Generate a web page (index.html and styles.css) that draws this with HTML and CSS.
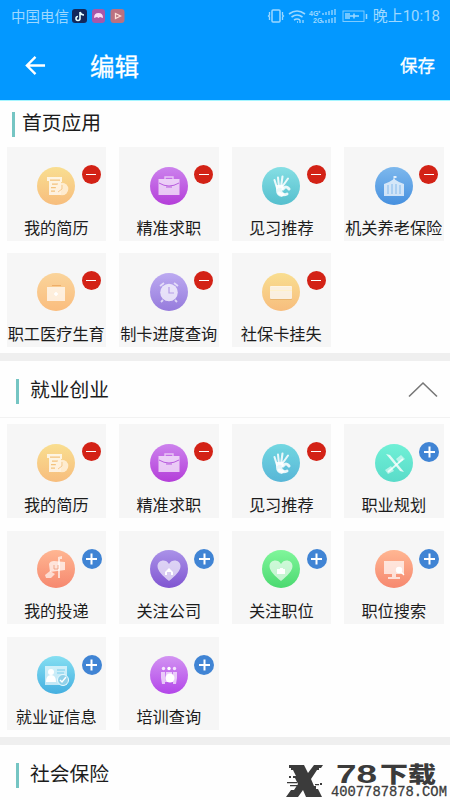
FILE: index.html
```
<!DOCTYPE html>
<html lang="zh-CN">
<head>
<meta charset="utf-8">
<meta name="viewport" content="width=device-width">
<title>编辑</title>
<link rel="stylesheet" href="styles.css">
</head>
<body>
<svg class="defs" aria-hidden="true">
  <symbol id="resume" viewBox="0 0 38 38"><path d="M10 10h15v5h-1v13H12V14h-2z" opacity=".75"/><path d="M13 12.500h10v1.200H13zM15 16.500h6v1.200h-6zM14 20h5v1.200h-5zM14 23.500h4v1.200h-4z" fill="#f4c27c"/><circle cx="25" cy="22" r="6.300" fill="#fff1dc" opacity=".85"/><path d="M25 18v4l-4 3" fill="none" stroke="#f6c98f"/></symbol>
  <symbol id="briefcase" viewBox="0 0 38 38"><path d="M15 12v-2h8v2" fill="none" stroke="#fff" stroke-width="1.400" opacity=".6"/><path d="M8.500 12h21v16h-21z" opacity=".68"/><path d="M9 16q10 6 20 0M16 20h6" fill="none" stroke="#b85dde" stroke-width="1"/></symbol>
  <symbol id="hand" viewBox="0 0 38 38"><g fill="none" stroke="#fff" stroke-linecap="round" opacity=".85"><path d="M15 21L12.500 13M17 20L16 10.500M19 20L20.500 9.500M20 20L26 11.500" stroke-width="2.100"/><path d="M17 26q4 3 8 1M21 22q3-4 6 0" stroke-width="3"/></g><path d="M14 18h7l1 3-2 3 3 3-3 3q-6-1-6-7z" opacity=".85"/></symbol>
  <symbol id="building" viewBox="0 0 38 38"><path d="M9 17l5-2 5-3 5 3 5 2v12H9z" opacity=".72"/><path d="M18.500 13V9h3v2h-2v2" opacity=".8"/><path d="M13 18v9M17 17v10M21 17v10M25 18v9" stroke="#71afe9" stroke-width=".8"/></symbol>
  <symbol id="medical" viewBox="0 0 38 38"><path d="M15 12.500h9" fill="none" stroke="#eeae69"/><path d="M10 14h18v14H10z" opacity=".7"/><path d="M19 19v4M17 21h4" stroke="#fff" stroke-width="1.500"/></symbol>
  <symbol id="clock" viewBox="0 0 38 38"><circle cx="19" cy="19.500" r="8.800" opacity=".72"/><path d="M10 13l4-3M28 13l-4-3M13 27l-2 2M25 27l2 2" stroke="#fff" stroke-width="1.800" opacity=".65"/><path d="M19 14v6h5" fill="none" stroke="#b59be8" stroke-width="1.200"/></symbol>
  <symbol id="card" viewBox="0 0 38 38"><rect x="8" y="14" width="22" height="13" rx="1" fill="#c88b43" opacity=".3"/><rect x="8" y="13" width="22" height="13" rx="1" opacity=".78"/><path d="M8 17.500h22" stroke="#fff0c9"/></symbol>
  <symbol id="plan" viewBox="0 0 38 38"><path d="M11 10l4 1 14 17-4-1z" opacity=".8"/><path d="M21 15l5-4 4 4-6 4zM10 26l6-4 3 5-6 3z" opacity=".55"/><path d="M28 15L13 28" stroke="#fff" stroke-width="1.700" opacity=".8"/></symbol>
  <symbol id="mailbox" viewBox="0 0 38 38"><path d="M12 14q1-3 5-3l11 1v8l-15 2z" opacity=".7"/><path d="M21 11V7l4-1v3h-2v19h-2v-7" opacity=".65"/><path d="M8 25l5-4 5 3-4 4H9z" opacity=".65"/><path d="M17 15v4h4v-4" fill="none" stroke="#ed9c7c" stroke-width=".8"/></symbol>
  <symbol id="heart-home" viewBox="0 0 38 38"><path d="M19 31C13 26 7.500 21 7.500 16c0-6 8.500-8 11.500-2 3-6 11.500-4 11.500 2 0 5-5.500 10-11.500 15z" opacity=".65"/><path d="M15 22l4-4 4 4v3h-2v-3h-4v3h-2z"/></symbol>
  <symbol id="heart-work" viewBox="0 0 38 38"><path d="M19 31C13 26 7.500 21 7.500 16c0-6 8.500-8 11.500-2 3-6 11.500-4 11.500 2 0 5-5.500 10-11.500 15z" opacity=".65"/><path d="M15 19h3v-1h3v1h2v5h-8z"/></symbol>
  <symbol id="monitor" viewBox="0 0 38 38"><path d="M9 11h20v13h-8v3h4v2H13v-2h4v-3H9z" opacity=".7"/><circle cx="24" cy="20" r="3.200"/><path d="M26 22l3 3" stroke="#fff" stroke-width="1.300"/></symbol>
  <symbol id="id-card" viewBox="0 0 38 38"><path d="M8 10h22v19H8z" opacity=".65"/><circle cx="14" cy="16" r="3"/><path d="M9 26q0-7 5-7t5 7z"/><path d="M20 14h8M20 17h7" stroke="#79cdec"/><circle cx="26" cy="24" r="5.500" fill="#91d1e9" stroke="#e9faff"/><path d="M23 24l2 2 4-5" fill="none" stroke="#fff" stroke-width="1.400"/></symbol>
  <symbol id="people" viewBox="0 0 38 38"><circle cx="13.500" cy="12.500" r="1.700" opacity=".8"/><circle cx="19" cy="12.500" r="1.700"/><circle cx="24.500" cy="12.500" r="1.700" opacity=".8"/><path d="M11 16h4v12h-3l-1-6zM23 16h4v6l-1 6h-3z" opacity=".65"/><path d="M16 16h6l1 10h-8z" opacity=".65"/><circle cx="20" cy="22" r="4.500"/></symbol>
</svg>

<header class="header">
  <div class="status">
    <span class="carrier">中国电信</span>
    <svg class="apps" viewBox="0 0 54 16"><rect x="0" y="1" width="15" height="14" rx="3" fill="#13285b"/><path d="M8 4v6.500a2 2 0 1 1-2-2M8 4q1 3 4 3" fill="none" stroke="#e4ffff" stroke-width="1.600"/><rect x="20" y="1" width="13" height="14" rx="3" fill="#a858a8"/><path d="M22 10q0-5 4.500-5t4.500 5l-3-1-1.500 1-1.500-1z" fill="#fbdcf5"/><rect x="38.500" y="1" width="14" height="14" rx="3" fill="#bb7180"/><path d="M43.500 5.500l5 2.500-5 2.500z" fill="none" stroke="#ffe1d8" stroke-width="1.300"/></svg>
    <svg class="signals" viewBox="0 0 102 16" fill="none" stroke="#9ed8ff"><rect x="5" y="2" width="8" height="12" rx="1" stroke-width="1.500"/><path d="M2.500 4v3l-1 1 1 1v3M15.500 4v3l1 1-1 1v3" stroke-width="1.300"/><path d="M22 6q8-6 16 0M24.500 9q5.500-4 11 0M27 12q3-2 6 0" stroke-width="1.600"/><path d="M30 14h1M33 12v3M36 12v3" stroke-width="1.300"/><text x="42" y="7.500" class="network">4G⁺</text><text x="46" y="15" class="network">2G</text><path d="M56 7V5M59 7V4M62 7V3M65 7V2M68 7V1M56 15v-2M59 15v-3M62 15v-4M65 15v-5M68 15v-6" stroke-width="1.300"/><rect x="76" y="3" width="21" height="10.500" opacity=".8"/><path d="M99.500 6v5" stroke-width="1.500"/><path d="M78 5h5v6h-5z" fill="#72c6ff" stroke="none"/><path d="M83 8h9M87 5.500v5" stroke-width="1.500"/></svg>
    <span class="time">晚上10:18</span>
  </div>
  <div class="toolbar">
    <svg class="back" viewBox="0 0 22 22"><path d="M11 2L2 11l9 9M2.500 11H21" fill="none" stroke="#fff" stroke-width="2.500"/></svg>
    <h1 class="title">编辑</h1>
    <span class="save">保存</span>
  </div>
</header>

<main>
  <section class="home">
    <h2 class="heading home-heading">首页应用</h2>
    <div class="grid">
      <div class="tile"><svg class="icon yellow"><use href="#resume"/></svg><i class="badge minus"></i><span class="label">我的简历</span></div>
      <div class="tile"><svg class="icon purple"><use href="#briefcase"/></svg><i class="badge minus"></i><span class="label">精准求职</span></div>
      <div class="tile"><svg class="icon cyan"><use href="#hand"/></svg><i class="badge minus"></i><span class="label">见习推荐</span></div>
      <div class="tile"><svg class="icon blue"><use href="#building"/></svg><i class="badge minus"></i><span class="label">机关养老保险</span></div>
      <div class="tile"><svg class="icon orange"><use href="#medical"/></svg><i class="badge minus"></i><span class="label">职工医疗生育</span></div>
      <div class="tile"><svg class="icon lavender"><use href="#clock"/></svg><i class="badge minus"></i><span class="label">制卡进度查询</span></div>
      <div class="tile"><svg class="icon yellow"><use href="#card"/></svg><i class="badge minus"></i><span class="label">社保卡挂失</span></div>
    </div>
  </section>
  <section class="employment">
    <div class="group-head"><h2 class="heading">就业创业</h2><svg class="chevron" viewBox="0 0 30 17"><path d="M1 15.500L15 2l14 13.500" fill="none" stroke="#777" stroke-width="1.600"/></svg></div>
    <div class="grid">
      <div class="tile"><svg class="icon yellow"><use href="#resume"/></svg><i class="badge minus"></i><span class="label">我的简历</span></div>
      <div class="tile"><svg class="icon purple"><use href="#briefcase"/></svg><i class="badge minus"></i><span class="label">精准求职</span></div>
      <div class="tile"><svg class="icon sky"><use href="#hand"/></svg><i class="badge minus"></i><span class="label">见习推荐</span></div>
      <div class="tile"><svg class="icon mint"><use href="#plan"/></svg><i class="badge plus"></i><span class="label">职业规划</span></div>
      <div class="tile"><svg class="icon coral"><use href="#mailbox"/></svg><i class="badge plus"></i><span class="label">我的投递</span></div>
      <div class="tile"><svg class="icon violet"><use href="#heart-home"/></svg><i class="badge plus"></i><span class="label">关注公司</span></div>
      <div class="tile"><svg class="icon green"><use href="#heart-work"/></svg><i class="badge plus"></i><span class="label">关注职位</span></div>
      <div class="tile"><svg class="icon coral"><use href="#monitor"/></svg><i class="badge plus"></i><span class="label">职位搜索</span></div>
      <div class="tile"><svg class="icon azure"><use href="#id-card"/></svg><i class="badge plus"></i><span class="label">就业证信息</span></div>
      <div class="tile"><svg class="icon magenta"><use href="#people"/></svg><i class="badge plus"></i><span class="label">培训查询</span></div>
    </div>
  </section>
  <section class="insurance"><div class="group-head"><h2 class="heading">社会保险</h2></div></section>
</main>

<div class="watermark">
  <svg class="mark" viewBox="0 0 38 34"><path d="M3 1h15l4 8 6-8h9l-2 3h-2v2h-2l-6 9 3 7h2v3h2l4 8H20l-3-7-5 7H0l5-7h3l4-6-3-6H7v-2h3L7 6H5V4H3zM1 18h10v1.200H1zM4 21h8v1.200H4zM29 20h4v1.200h-4zM34 19h2v2h-2zM3 12h2v2H3z" fill="#3b3b3b"/></svg>
  <div class="brand">
    <svg class="brand-name" viewBox="0 0 104 26"><text x="0" y="22" class="digits" textLength="41" lengthAdjust="spacingAndGlyphs">78</text><text x="44" y="21" class="word" textLength="56" lengthAdjust="spacingAndGlyphs">下载</text></svg>
    <span class="site">4007787878.COM</span>
  </div>
</div>
</body>
</html>
```
FILE: styles.css
```
* { box-sizing: border-box; }
body {
  margin: 0;
  width: 450px;
  height: 800px;
  overflow: hidden;
  position: relative;
  background: #fefefe;
  color: #1c1c1c;
  font-family: "Noto Sans CJK SC", sans-serif;
}
.defs { display: none; }
h1, h2 { margin: 0; font-weight: 400; }

.header { height: 101px; background: #0398ff; border-bottom: 1px solid #a5f5ff; }
.status {
  height: 31px;
  padding: 0 10px 0 11px;
  display: flex;
  align-items: center;
  color: #9ed8ff;
  font-size: 14.5px;
  line-height: 30px;
}
.apps { width: 54px; height: 16px; margin-left: 3px; }
.signals { width: 102px; height: 16px; margin-left: auto; }
.network { font: 700 7px "Liberation Sans", sans-serif; fill: #9ed8ff; stroke: none; }
.time { margin-left: 4px; font-size: 15px; white-space: nowrap; font-family: Roboto, "Noto Sans CJK SC", sans-serif; }
.toolbar { height: 69px; padding: 0 15px 0 25px; display: flex; align-items: center; color: #fff; }
.back { width: 21px; height: 21px; margin-bottom: 1px; }
.title { margin-left: 44px; font-size: 24.5px; line-height: 36px; -webkit-text-stroke: .3px #fff; }
.save { margin-left: auto; font-size: 17.5px; line-height: 26px; margin-bottom: 1px; -webkit-text-stroke: .3px #fff; }

.home { height: 260px; padding-top: 11px; border-bottom: 8px solid #efefef; }
.heading {
  height: 25px;
  margin-left: 16px;
  padding-left: 11px;
  border-left: 3px solid #75c5c3;
  font-size: 19.8px;
  line-height: 20px;
}
.home-heading { margin: 0 0 10px 12px; padding-left: 7px; }
.grid {
  margin-left: 6.5px;
  display: grid;
  grid-template-columns: repeat(4, 99.5px);
  grid-auto-rows: 93.5px;
  gap: 12.8px 13px;
}
.tile {
  position: relative;
  display: flex;
  flex-direction: column;
  align-items: center;
  padding-top: 19.5px;
  background: #f6f6f6;
}
.icon { width: 38px; height: 38px; flex: none; border-radius: 50%; fill: #fff; }
.label { margin-top: 10px; font-size: 16.2px; line-height: 24px; white-space: nowrap; }
.badge {
  position: absolute;
  top: 18px;
  left: 75px;
  width: 19px;
  height: 19px;
  border-radius: 50%;
  background: #d32216;
}
.badge::before, .plus::after {
  content: "";
  position: absolute;
  left: 4.5px;
  top: 9px;
  width: 10px;
  height: 1px;
  background: #fff;
}
.badge.plus { width: 20px; height: 20px; background: #4084d4; }
.badge.plus::before, .badge.plus::after { left: 4.5px; top: 9px; width: 11px; height: 2px; }
.plus::after { transform: rotate(90deg); }

.yellow { background: linear-gradient(#f9de90, #f7bd7d); }
.purple { background: linear-gradient(#cc82ed, #b43ed9); }
.cyan { background: linear-gradient(#86dfe4, #55bfce); }
.blue { background: linear-gradient(#7db8ed, #4690df); }
.orange { background: linear-gradient(#fad49b, #fabd7e); }
.lavender { background: linear-gradient(#bcaaf1, #967bdc); }
.sky { background: linear-gradient(#72d7e1, #58b6d7); }
.mint { background: linear-gradient(#70f0d6, #59dbc9); }
.coral { background: linear-gradient(#ffb692, #f6886f); }
.violet { background: linear-gradient(#aa92e8, #8055d1); }
.green { background: linear-gradient(#80f69b, #4bd970); }
.azure { background: linear-gradient(#85dff2, #45afe0); }
.magenta { background: linear-gradient(#d293f2, #b346e9); }

.employment { height: 384px; border-bottom: 8px solid #efefef; }
.group-head { height: 56.5px; padding: 18px 12px 0 0; display: flex; justify-content: space-between; border-bottom: 1px solid #f2f2f2; }
.chevron { width: 30px; height: 17px; margin-top: 2px; }
.employment .grid { margin-top: 6.8px; }
.insurance .group-head { border: 0; }

.watermark { position: absolute; left: 286px; top: 764px; display: flex; color: #3b3b3b; }
.mark { width: 38px; height: 34px; }
.brand { display: flex; flex-direction: column; margin: -3px 0 0 7px; }
.brand-name { width: 104px; height: 26px; margin-left: 5px; }
.digits { font: 700 25px "Liberation Sans", sans-serif; fill: #3b3b3b; }
.word { font: 900 22px/1 "Noto Sans CJK SC", sans-serif; fill: #3b3b3b; }
.site { font: 400 13.8px/12px "Liberation Mono", monospace; -webkit-text-stroke: .3px #3b3b3b; }
```
